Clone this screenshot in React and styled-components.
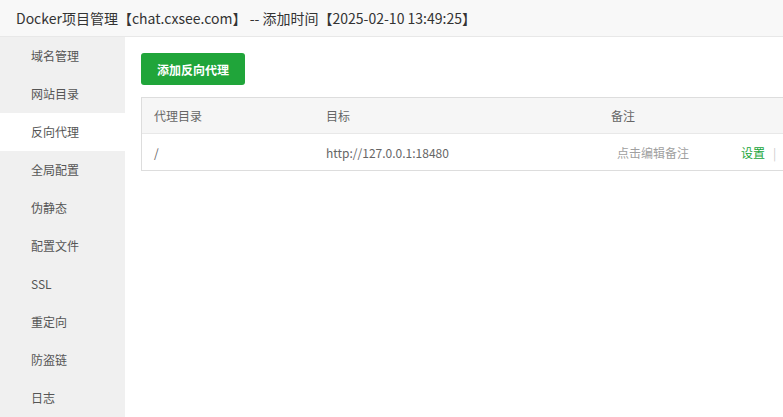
import React from 'react'
import styled, { createGlobalStyle } from 'styled-components'

const Global = createGlobalStyle`
  html, body {
    margin: 0;
    padding: 0;
    background: #fff;
    font-family: "Microsoft YaHei", "Noto Sans CJK SC", "Liberation Sans", sans-serif;
    color: #333;
    overflow: hidden;
  }
`

const Page = styled.div`
  width: 783px;
  height: 417px;
  display: flex;
  flex-direction: column;
  overflow: hidden;
`

const Title = styled.div`
  height: 36px;
  flex: 0 0 36px;
  display: flex;
  align-items: center;
  padding-left: 16px;
  background: #f8f8f8;
  border-bottom: 1px solid #e8e8e8;
  font-size: 14px;
  color: #333;
  white-space: nowrap;
`

const Body = styled.div`
  flex: 1;
  display: flex;
  min-height: 0;
`

const Side = styled.ul`
  list-style: none;
  margin: 0;
  padding: 0;
  width: 125px;
  flex: 0 0 125px;
  background: #f0f0f0;
`

const SideItem = styled.li`
  height: 38px;
  line-height: 38px;
  padding-left: 31px;
  font-size: 12px;
  color: #555;
  background: ${p => (p.$active ? '#fff' : 'transparent')};
`

const Main = styled.div`
  flex: 1;
  padding: 16px 0 0 16px;
  min-width: 0;
  overflow: hidden;
`

const Button = styled.button`
  height: 32px;
  width: 104px;
  border: none;
  border-radius: 3px;
  background: #20a53a;
  color: #fff;
  font-family: inherit;
  font-size: 12px;
  font-weight: bold;
  padding: 0;
  display: block;
`

const Table = styled.div`
  margin-top: 12px;
  width: 680px;
  border: 1px solid #ddd;
  border-right: none;
`

const Row = styled.div`
  display: grid;
  grid-template-columns: 172px 285px 130px 1fr;
  height: ${p => (p.$head ? '35px' : '36px')};
  align-items: center;
  background: ${p => (p.$head ? '#f6f6f6' : '#fff')};
  border-top: ${p => (p.$head ? 'none' : '1px solid #e8e8e8')};
  font-size: 12px;
  color: #666;
`

const Cell = styled.div`
  padding: 0 12px;
  white-space: nowrap;
  text-align: ${p => (p.$right ? 'right' : 'left')};
`

const Note = styled.span`
  color: #a0a0a0;
  padding-left: 6px;
`

const Link = styled.a`
  color: #20a53a;
  text-decoration: none;
`

const Sep = styled.span`
  color: #ccc;
  margin: 0 9px 0 8px;
`

const items = ['域名管理', '网站目录', '反向代理', '全局配置', '伪静态', '配置文件', 'SSL', '重定向', '防盗链', '日志']

export default function App() {
  return (
    <Page>
      <Global />
      <Title>Docker项目管理【chat.cxsee.com】 -- 添加时间【2025-02-10 13:49:25】</Title>
      <Body>
        <Side>
          {items.map(t => (
            <SideItem key={t} $active={t === '反向代理'}>{t}</SideItem>
          ))}
        </Side>
        <Main>
          <Button>添加反向代理</Button>
          <Table>
            <Row $head>
              <Cell>代理目录</Cell>
              <Cell>目标</Cell>
              <Cell>备注</Cell>
              <Cell $right>操作</Cell>
            </Row>
            <Row>
              <Cell>/</Cell>
              <Cell>http://127.0.0.1:18480</Cell>
              <Cell><Note>点击编辑备注</Note></Cell>
              <Cell>
                <Link>设置</Link>
                <Sep>|</Sep>
                <Link>删除</Link>
              </Cell>
            </Row>
          </Table>
        </Main>
      </Body>
    </Page>
  )
}
